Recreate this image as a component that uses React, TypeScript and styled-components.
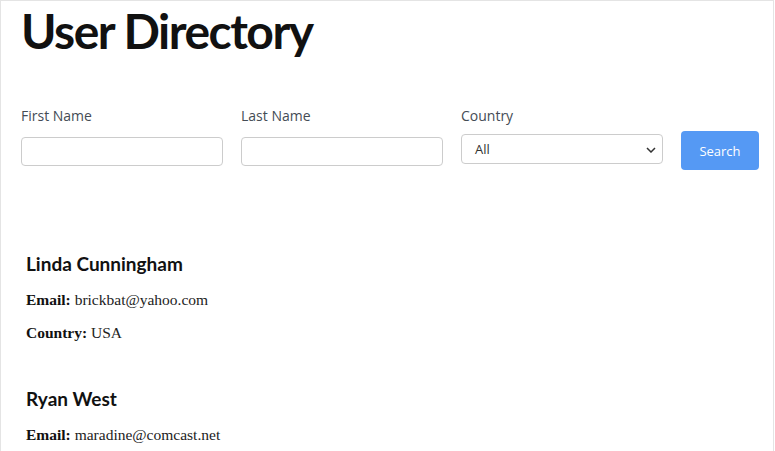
import styled, { createGlobalStyle } from 'styled-components';

interface User {
  name: string;
  email: string;
  country: string;
}

const users: User[] = [
  { name: 'Linda Cunningham', email: 'brickbat@yahoo.com', country: 'USA' },
  { name: 'Ryan West', email: 'maradine@comcast.net', country: 'Canada' },
];

const GlobalStyle = createGlobalStyle`
  html, body {
    margin: 0;
    padding: 0;
    background: #fff;
    overflow: hidden;
  }
  body {
    font-family: 'Liberation Serif', serif;
  }
`;

const Page = styled.div`
  box-sizing: border-box;
  width: 774px;
  height: 451px;
  border: 1px solid #e4e4e4;
  border-bottom: none;
  padding: 0 0 0 20px;
  overflow: hidden;
`;

const Title = styled.h1`
  margin: 0;
  font-family: Lato, sans-serif;
  font-weight: 700;
  font-size: 48px;
  line-height: 60px;
  letter-spacing: -1.5px;
  color: #111;
`;

const SearchForm = styled.form`
  display: flex;
  align-items: flex-start;
  gap: 18px;
  height: 64px;
  margin-top: 46px;
`;

const Field = styled.label`
  display: flex;
  flex-direction: column;
  width: 202px;
`;

const FieldLabel = styled.span`
  font-family: 'Open Sans', sans-serif;
  font-size: 14px;
  line-height: 18px;
  color: #444c55;
`;

const TextInput = styled.input`
  box-sizing: border-box;
  height: 29px;
  width: 100%;
  margin: 12px 0 0;
  border: 1px solid #cccccc;
  border-radius: 4px;
  background: #fff;
`;

const SelectBox = styled.div`
  position: relative;
  box-sizing: border-box;
  height: 30px;
  width: 100%;
  margin-top: 9px;
  border: 1px solid #cccccc;
  border-radius: 4px;
  display: flex;
  align-items: center;
  padding-left: 13px;
  font-family: 'Open Sans', sans-serif;
  font-size: 13px;
  color: #333;
  svg {
    position: absolute;
    right: 6px;
    top: 12px;
  }
`;

const SearchButton = styled.button`
  box-sizing: border-box;
  width: 78px;
  height: 39px;
  margin-top: 24px;
  border: none;
  border-radius: 4px;
  background: #5599f4;
  color: #fff;
  font-family: 'Open Sans', sans-serif;
  font-size: 13px;
`;

const Results = styled.div`
  margin-top: 81px;
  padding-left: 5px;
`;

const Card = styled.section`
  margin-bottom: 44px;
`;

const Name = styled.h2`
  margin: 0 0 14px;
  font-family: Lato, sans-serif;
  font-size: 19px;
  line-height: 24px;
  font-weight: 700;
  color: #111;
`;

const Line = styled.p`
  margin: 0 0 13px;
  font-family: 'Liberation Serif', serif;
  font-size: 15.5px;
  line-height: 20px;
  color: #222;
  b {
    color: #111;
  }
`;

export default function App() {
  return (
    <Page>
      <GlobalStyle />
      <Title>User Directory</Title>
      <SearchForm onSubmit={(e) => e.preventDefault()}>
        <Field>
          <FieldLabel>First Name</FieldLabel>
          <TextInput />
        </Field>
        <Field>
          <FieldLabel>Last Name</FieldLabel>
          <TextInput />
        </Field>
        <Field>
          <FieldLabel>Country</FieldLabel>
          <SelectBox>
            All
            <svg width="10" height="6" viewBox="0 0 10 6">
              <path d="M1 1l4 4 4-4" fill="none" stroke="#333" strokeWidth="1.5" />
            </svg>
          </SelectBox>
        </Field>
        <SearchButton type="submit">Search</SearchButton>
      </SearchForm>
      <Results>
        {users.map((u) => (
          <Card key={u.name}>
            <Name>{u.name}</Name>
            <Line>
              <b>Email:</b> {u.email}
            </Line>
            <Line>
              <b>Country:</b> {u.country}
            </Line>
          </Card>
        ))}
      </Results>
    </Page>
  );
}
